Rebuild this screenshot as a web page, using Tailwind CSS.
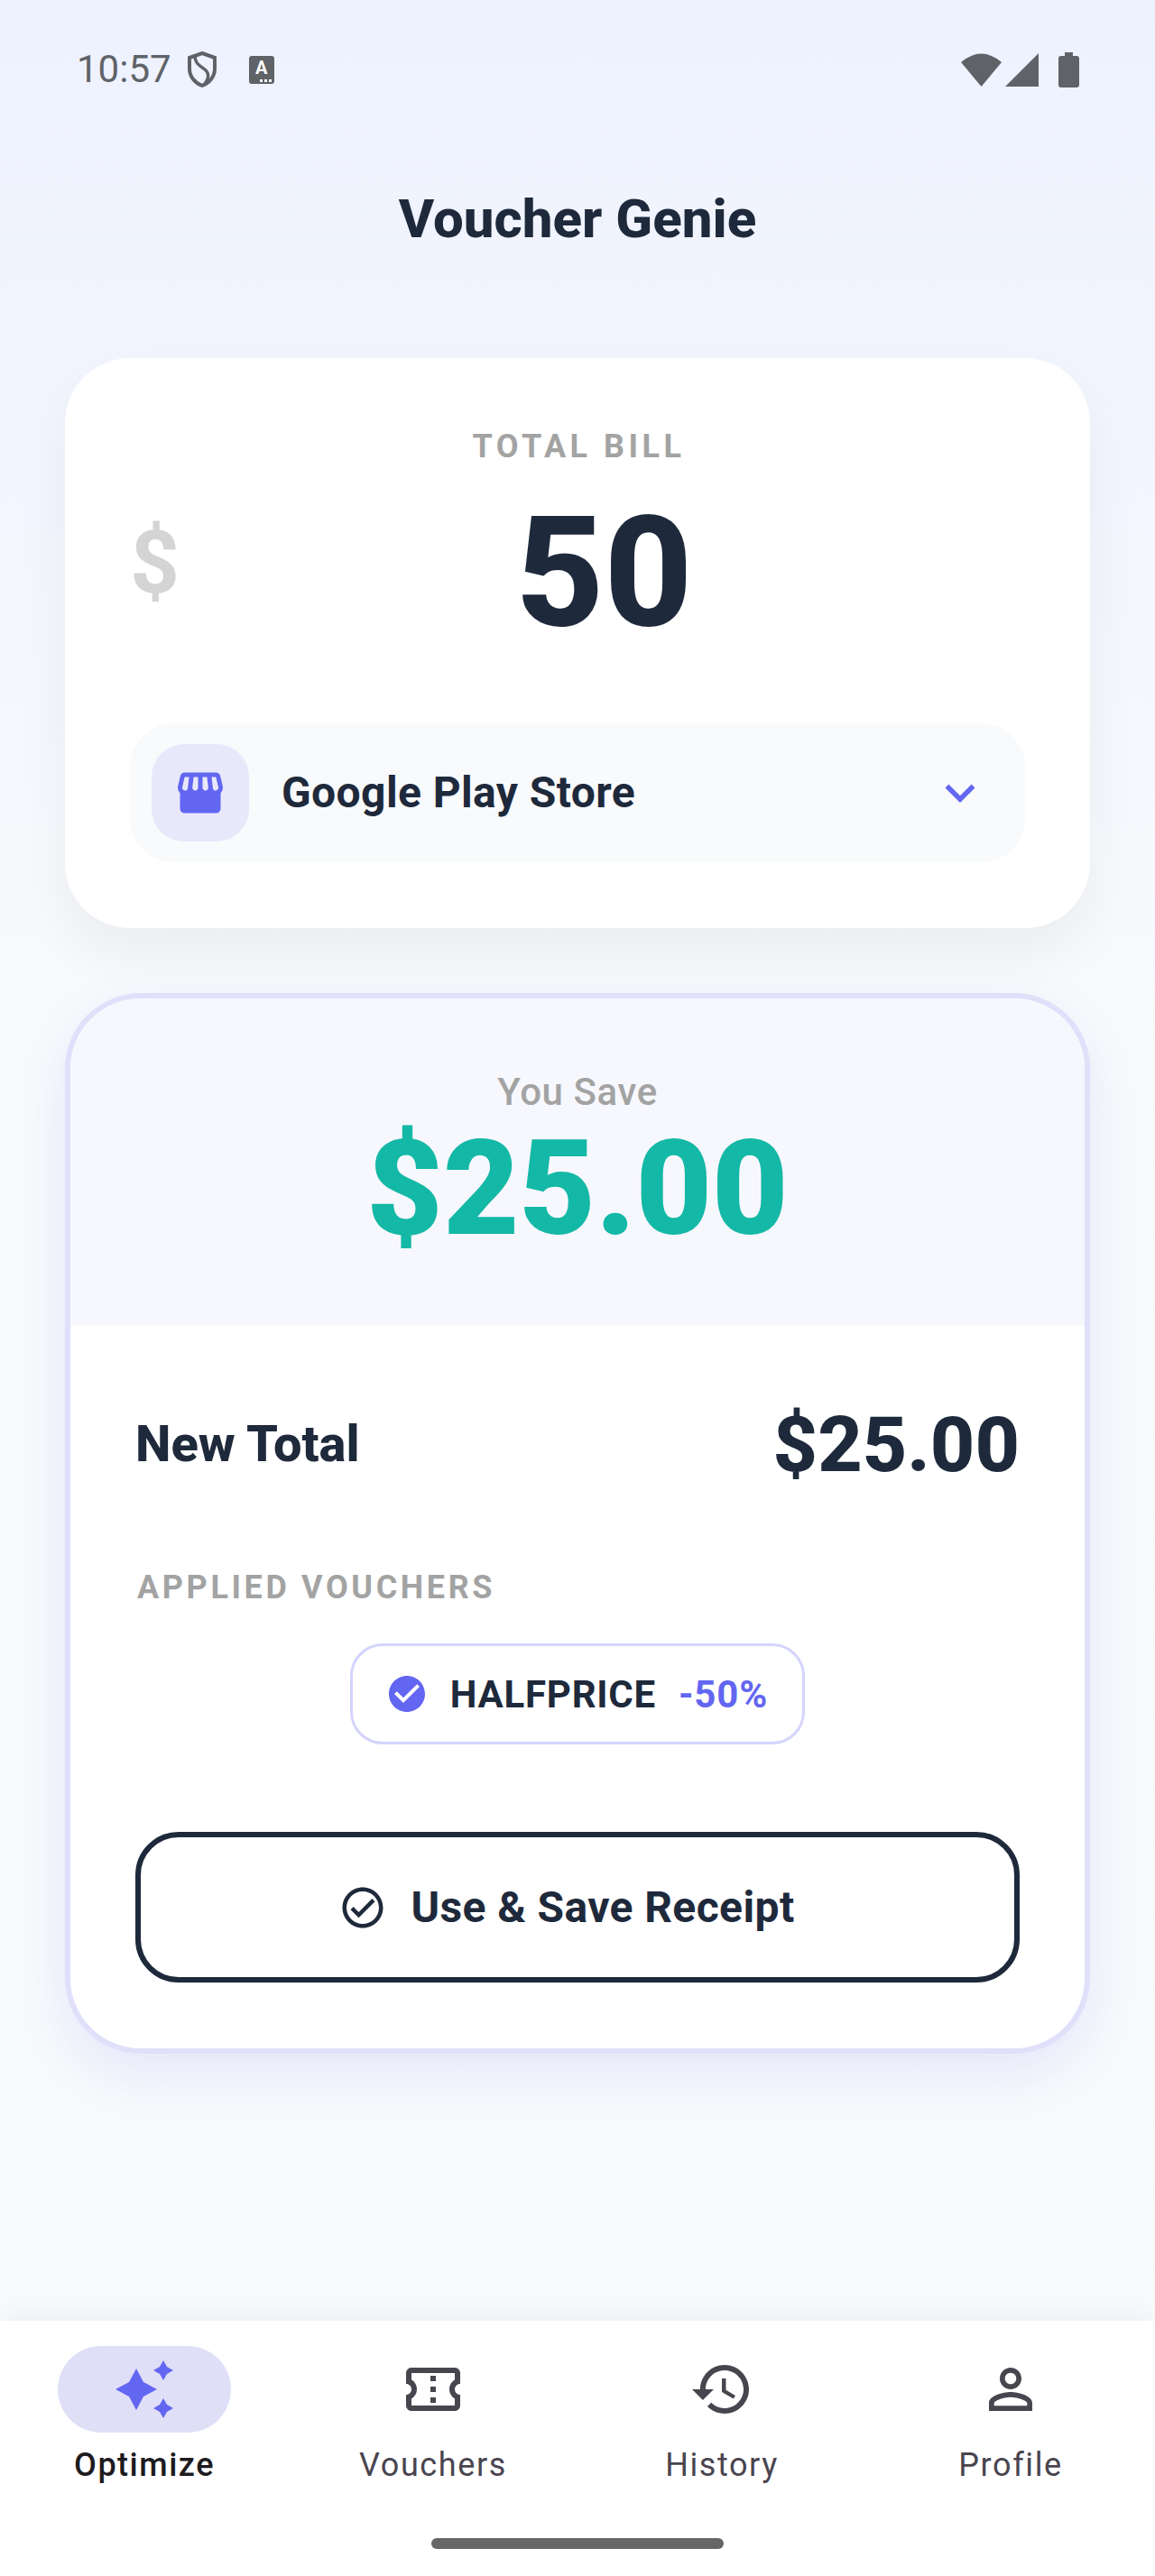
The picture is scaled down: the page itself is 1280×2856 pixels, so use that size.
<!DOCTYPE html>
<html lang="en">
  <head>
    <meta charset="UTF-8" />
    <meta name="viewport" content="width=device-width, initial-scale=1.0" />
    <script src="https://cdn.jsdelivr.net/npm/@tailwindcss/browser@4"></script>
    <title>Voucher Genie</title>
  </head>
  <body class="[font-family:Roboto,sans-serif]">
    <div class="flex flex-col h-screen bg-linear-to-b from-[#eef2ff] to-[#f8fafc] to-[40%] overflow-hidden">
      <!-- status bar -->
      <div class="flex items-center justify-between h-[78px] mt-[38px] pl-[85px] pr-[84px] text-[#5f6368] shrink-0">
        <div class="flex items-center">
          <span class="text-[42px] leading-none">10:57</span>
          <svg class="ml-[18px] w-[32px] h-[40px]" viewBox="0 0 32 40" fill="none" stroke="#5f6368" stroke-width="4">
            <path d="M16 2 L30 7 V19 C30 28 24 35 16 38 C8 35 2 28 2 19 V7Z" />
            <path d="M8 5 C8 14 14 16 19 20 C24 24 24 30 18 37" stroke-width="3.5" />
          </svg>
          <div class="relative flex items-start justify-center ml-[36px] w-[28px] h-[31px] rounded-[3px] bg-[#5f6368] text-white text-[20px] font-bold leading-[26px]">
            A
            <svg class="absolute right-[3px] bottom-[2px] w-[13px] h-[3px]" viewBox="0 0 13 3" fill="#fff"><rect width="3" height="3" /><rect x="5" width="3" height="3" /><rect x="10" width="3" height="3" /></svg>
          </div>
        </div>
        <div class="flex items-center gap-[4px]">
          <svg class="w-[45px] h-[38px]" viewBox="0 0 45 38" fill="#5f6368"><path d="M22.5 38 L0 11 Q22.5 -8 45 11Z" /></svg>
          <svg class="w-[37px] h-[38px]" viewBox="0 0 37 38" fill="#5f6368"><path d="M0 38 L37 1 V38Z" /></svg>
          <svg class="ml-[18px] w-[23px] h-[39px]" viewBox="0 0 23 39" fill="#5f6368"><path d="M7 0 H16 V4 H20 Q23 4 23 7 V36 Q23 39 20 39 H3 Q0 39 0 36 V7 Q0 4 3 4 H7Z" /></svg>
        </div>
      </div>

      <h1 class="mt-[91px] text-center text-[60px] leading-[72px] font-extrabold text-[#1e293b] shrink-0">Voucher Genie</h1>

      <main class="flex flex-col gap-[72px] mt-[118px] px-[72px] shrink-0">
        <!-- bill card -->
        <section class="flex flex-col h-[632px] px-[72px] pt-[74px] rounded-[72px] bg-white shadow-[0_30px_60px_rgba(0,0,0,0.05)]">
          <p class="ml-[3px] text-center text-[36px] leading-[48px] font-bold tracking-[4.5px] text-[#a3a3a3]">TOTAL BILL</p>
          <div class="flex items-center h-[192px] mt-[20px]">
            <span class="mb-[22px] text-[96px] font-bold leading-none text-[#d4d4d4]">$</span>
            <span class="flex-1 pl-[4px] text-center text-[170px] font-extrabold leading-none text-[#1e293b]">50</span>
          </div>
          <div class="flex items-center h-[154px] mt-[71px] pl-[24px] pr-[39px] rounded-[48px] bg-[#f8fafc]">
            <div class="flex items-center justify-center w-[108px] h-[108px] rounded-[36px] bg-[#e8e8fa]">
              <svg class="w-[60px] h-[60px]" viewBox="0 0 24 24" fill="#6366f1"><path fill-rule="evenodd" d="M21.9 8.89l-1.05-4.37c-.22-.9-1-1.52-1.91-1.52H5.05c-.9 0-1.69.63-1.9 1.52L2.1 8.89c-.24 1.02-.02 2.06.62 2.88.08.11.19.19.28.29V19c0 1.1.9 2 2 2h14c1.1 0 2-.9 2-2v-6.94c.09-.09.2-.18.28-.28.64-.82.87-1.86.62-2.89zM7.02 5l-.58 4.86c-.08.65-.6 1.14-1.21 1.14-.49 0-.8-.29-.93-.47-.26-.33-.35-.76-.25-1.17L5.05 5h1.97zm11.89-.01 1.05 4.37c.1.42.01.84-.25 1.17-.14.18-.44.47-.94.47-.61 0-1.14-.49-1.21-1.14L16.98 5l1.93-.01zM15.51 9.52c.05.39-.07.78-.33 1.07-.23.26-.55.41-.96.41-.67 0-1.22-.59-1.22-1.31V5h1.96l.55 4.52zM11 9.69c0 .72-.55 1.31-1.29 1.31-.34 0-.65-.15-.89-.41-.25-.29-.37-.68-.33-1.07L9.04 5H11v4.69z" /></svg>
            </div>
            <span class="flex-1 ml-[36px] text-[48px] font-bold tracking-[0.4px] text-[#1e293b]">Google Play Store</span>
            <svg class="w-[66px] h-[66px]" viewBox="0 0 24 24" fill="#6366f1"><path d="M16.59 8.59L12 13.17 7.41 8.59 6 10l6 6 6-6z" /></svg>
          </div>
        </section>

        <!-- result card -->
        <section class="flex flex-col h-[1176px] rounded-[84px] border-[6px] border-[#e0e0fb] bg-white overflow-hidden shadow-[0_24px_60px_rgba(99,102,241,0.12)]">
          <div class="flex flex-col items-center h-[363px] pt-[76px] bg-[#f7f8fe]">
            <p class="text-[42px] leading-[56px] font-medium tracking-[0.6px] text-[#a3a3a3]">You Save</p>
            <p class="text-[146px] leading-[160px] font-black text-[#14b8a6]">$25.00</p>
          </div>
          <div class="flex flex-col px-[72px]">
            <div class="flex items-center justify-between mt-[71px] h-[120px]">
              <span class="text-[56px] font-extrabold text-[#1e293b]">New Total</span>
              <span class="text-[86px] font-extrabold text-[#1e293b]">$25.00</span>
            </div>
            <p class="mt-[75px] ml-[2px] text-[36px] leading-[48px] font-bold tracking-[3.6px] text-[#a3a3a3]">APPLIED VOUCHERS</p>
            <div class="flex justify-center mt-[38px]">
              <div class="flex items-center h-[112px] pl-[36px] pr-[38px] rounded-[36px] border-[3px] border-[#d4d4fd]">
                <svg class="w-[48px] h-[48px]" viewBox="0 0 24 24" fill="#6366f1"><path d="M12 2C6.48 2 2 6.48 2 12s4.48 10 10 10 10-4.48 10-10S17.52 2 12 2zm-2 15-5-5 1.41-1.41L10 14.17l7.59-7.59L19 8l-9 9z" /></svg>
                <span class="ml-[24px] text-[42px] font-bold tracking-[0.75px] text-[#1e293b]">HALFPRICE</span>
                <span class="ml-[25px] text-[42px] font-bold tracking-[0.85px] text-[#6366f1]">-50%</span>
              </div>
            </div>
            <button class="flex items-center justify-center gap-[26px] h-[167px] mt-[97px] pr-[24px] rounded-[48px] border-[6px] border-[#1e293b] text-[48px] font-bold tracking-[0.4px] text-[#1e293b]">
              <svg class="w-[54px] h-[54px]" viewBox="0 0 24 24" fill="#1e293b"><path d="M12 2C6.48 2 2 6.48 2 12s4.48 10 10 10 10-4.48 10-10S17.52 2 12 2zm0 18c-4.41 0-8-3.59-8-8s3.59-8 8-8 8 3.59 8 8-3.59 8-8 8zm4.59-12.42L10 14.17l-2.59-2.58L6 13l4 4 8-8z" /></svg>
              Use &amp; Save Receipt
            </button>
          </div>
        </section>
      </main>

      <!-- bottom nav -->
      <nav class="relative grid grid-cols-4 mt-auto h-[283px] bg-white shadow-[0_-6px_30px_rgba(0,0,0,0.05)] text-[36px] leading-[48px] font-[450] tracking-[1.6px] text-[#49454f] shrink-0">
        <div class="flex flex-col items-center pt-[28px]">
          <div class="flex items-center justify-center w-[192px] h-[96px] rounded-full bg-[#e0dff8]">
            <svg class="w-[72px] h-[72px]" viewBox="0 0 72 72" fill="#6366f1">
              <path d="M27 13 L35 28 L50 36 L35 44 L27 59 L19 44 L4 36 L19 28Z" />
              <path d="M57 4 L61 11 L68 15 L61 19 L57 26 L53 19 L46 15 L53 11Z" />
              <path d="M57 46 L61 53 L68 57 L61 61 L57 68 L53 61 L46 57 L53 53Z" />
            </svg>
          </div>
          <span class="mt-[12px] font-medium tracking-[1.5px] text-[#1d1b20]">Optimize</span>
        </div>
        <div class="flex flex-col items-center pt-[28px]">
          <div class="flex items-center justify-center h-[96px]">
            <svg class="w-[72px] h-[72px]" viewBox="0 0 24 24" fill="#49454f"><path d="M22 10V6c0-1.11-.9-2-2-2H4c-1.1 0-1.99.89-1.99 2v4c1.1 0 1.99.9 1.99 2s-.89 2-2 2v4c0 1.1.9 2 2 2h16c1.1 0 2-.9 2-2v-4c-1.1 0-2-.9-2-2s.9-2 2-2zm-2-1.46c-1.19.69-2 1.99-2 3.46s.81 2.77 2 3.46V18H4v-2.54c1.19-.69 2-1.99 2-3.46 0-1.48-.8-2.77-1.99-3.46L4 6h16v2.54zM11 15h2v2h-2zm0-4h2v2h-2zm0-4h2v2h-2z" /></svg>
          </div>
          <span class="mt-[12px]">Vouchers</span>
        </div>
        <div class="flex flex-col items-center pt-[28px]">
          <div class="flex items-center justify-center h-[96px]">
            <svg class="w-[72px] h-[72px]" viewBox="0 0 24 24" fill="#49454f"><path d="M13 3c-4.97 0-9 4.03-9 9H1l3.89 3.89.07.14L9 12H6c0-3.87 3.13-7 7-7s7 3.13 7 7-3.13 7-7 7c-1.93 0-3.68-.79-4.94-2.06l-1.42 1.42C8.27 19.99 10.51 21 13 21c4.97 0 9-4.03 9-9s-4.03-9-9-9zm-1 5v5l4.28 2.54.72-1.21-3.5-2.08V8H12z" /></svg>
          </div>
          <span class="mt-[12px]">History</span>
        </div>
        <div class="flex flex-col items-center pt-[28px]">
          <div class="flex items-center justify-center h-[96px]">
            <svg class="w-[72px] h-[72px]" viewBox="0 0 24 24" fill="#49454f"><path d="M12 5.9c1.16 0 2.1.94 2.1 2.1s-.94 2.1-2.1 2.1S9.9 9.16 9.9 8s.94-2.1 2.1-2.1m0 9c2.97 0 6.1 1.46 6.1 2.1v1.1H5.9V17c0-.64 3.13-2.1 6.1-2.1M12 4C9.79 4 8 5.79 8 8s1.79 4 4 4 4-1.79 4-4-1.79-4-4-4zm0 9c-2.67 0-8 1.34-8 4v3h16v-3c0-2.66-5.33-4-8-4z" /></svg>
          </div>
          <span class="mt-[12px]">Profile</span>
        </div>
        <div class="absolute left-[478px] top-[241px] w-[324px] h-[12px] rounded-full bg-[#666]"></div>
      </nav>
    </div>
  </body>
</html>
